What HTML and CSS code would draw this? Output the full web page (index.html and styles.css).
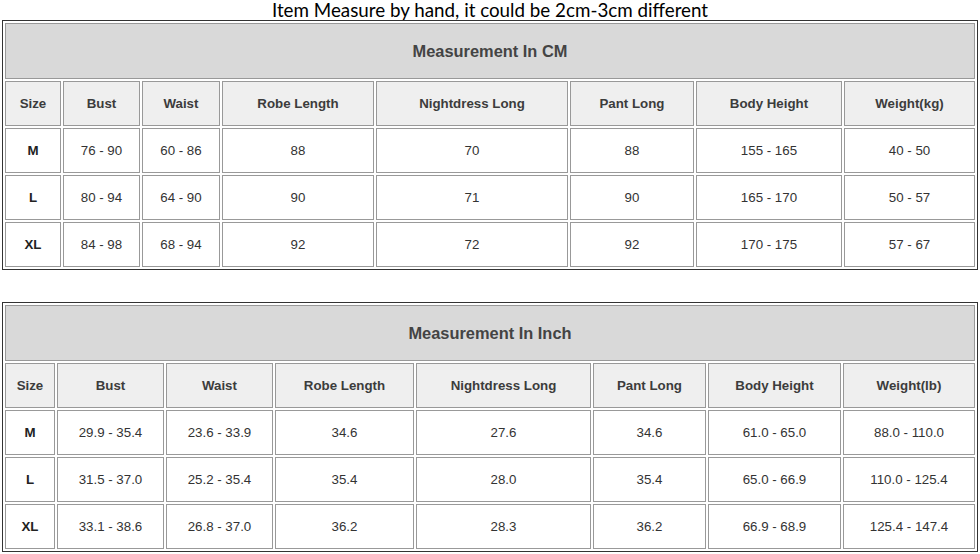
FILE: index.html
```html
<!DOCTYPE html>
<html>
<head>
<meta charset="utf-8">
<link rel="stylesheet" href="styles.css">
</head>
<body>
<div class="note">Item Measure by hand, it could be 2cm-3cm different</div>
<table class="size-table cm">
  <colgroup>
    <col class="a1"><col class="a2"><col class="a3"><col class="a4"><col class="a5"><col class="a6"><col class="a7"><col class="a8">
  </colgroup>
  <tr><td class="caption" colspan="8">Measurement In CM</td></tr>
  <tr class="head"><td>Size</td><td>Bust</td><td>Waist</td><td>Robe Length</td><td>Nightdress Long</td><td>Pant Long</td><td>Body Height</td><td>Weight(kg)</td></tr>
  <tr><td class="sz">M</td><td>76 - 90</td><td>60 - 86</td><td>88</td><td>70</td><td>88</td><td>155 - 165</td><td>40 - 50</td></tr>
  <tr><td class="sz">L</td><td>80 - 94</td><td>64 - 90</td><td>90</td><td>71</td><td>90</td><td>165 - 170</td><td>50 - 57</td></tr>
  <tr><td class="sz">XL</td><td>84 - 98</td><td>68 - 94</td><td>92</td><td>72</td><td>92</td><td>170 - 175</td><td>57 - 67</td></tr>
</table>
<table class="size-table inch">
  <colgroup>
    <col class="b1"><col class="b2"><col class="b3"><col class="b4"><col class="b5"><col class="b6"><col class="b7"><col class="b8">
  </colgroup>
  <tr><td class="caption" colspan="8">Measurement In Inch</td></tr>
  <tr class="head"><td>Size</td><td>Bust</td><td>Waist</td><td>Robe Length</td><td>Nightdress Long</td><td>Pant Long</td><td>Body Height</td><td>Weight(lb)</td></tr>
  <tr><td class="sz">M</td><td>29.9 - 35.4</td><td>23.6 - 33.9</td><td>34.6</td><td>27.6</td><td>34.6</td><td>61.0 - 65.0</td><td>88.0 - 110.0</td></tr>
  <tr><td class="sz">L</td><td>31.5 - 37.0</td><td>25.2 - 35.4</td><td>35.4</td><td>28.0</td><td>35.4</td><td>65.0 - 66.9</td><td>110.0 - 125.4</td></tr>
  <tr><td class="sz">XL</td><td>33.1 - 38.6</td><td>26.8 - 37.0</td><td>36.2</td><td>28.3</td><td>36.2</td><td>66.9 - 68.9</td><td>125.4 - 147.4</td></tr>
</table>
</body>
</html>
```
FILE: styles.css
```css
html, body {
  margin: 0;
  padding: 0;
  background: #fff;
}
.note {
  height: 20px;
  line-height: 20px;
  text-align: center;
  font-family: Lato, "Liberation Sans", sans-serif;
  font-size: 18.8px;
  color: #000;
}
.size-table {
  width: 976px;
  margin: 0 auto;
  table-layout: fixed;
  border-collapse: separate;
  border-spacing: 2px;
  border: 1px solid #333;
  font-family: "Liberation Sans", Arial, sans-serif;
  font-size: 13.3px;
  color: #333;
}
.size-table.cm {
  margin-bottom: 32px;
}
.size-table td {
  border: 1px solid #999;
  padding: 0;
  height: 43px;
  text-align: center;
  vertical-align: middle;
  background: #fff;
}
.size-table td.caption {
  height: 54px;
  background: #d9d9d9;
  font-weight: bold;
  font-size: 16.4px;
  color: #444;
}
.size-table .head td {
  background: #efefef;
  font-weight: bold;
  color: #3c3c3c;
}
.size-table td.sz {
  font-weight: bold;
  color: #222;
}
.a1 { width: 56px; }
.a2 { width: 77px; }
.a3 { width: 78px; }
.a4 { width: 152px; }
.a5 { width: 192px; }
.a6 { width: 124px; }
.a7 { width: 146px; }
.a8 { width: 131px; }
.b1 { width: 50px; }
.b2 { width: 107px; }
.b3 { width: 107px; }
.b4 { width: 139px; }
.b5 { width: 175px; }
.b6 { width: 113px; }
.b7 { width: 133px; }
.b8 { width: 132px; }
```
